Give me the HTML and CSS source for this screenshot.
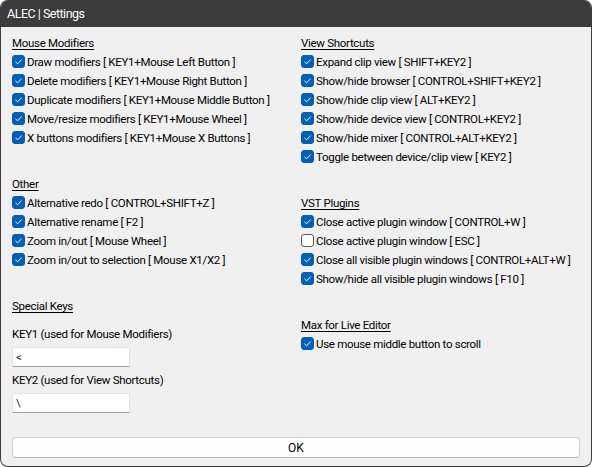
FILE: index.html
```html
<!DOCTYPE html>
<html lang="en">
<head>
    <meta charset="UTF-8">
    <title>ALEC | Settings</title>
    <link rel="stylesheet" href="styles.css">
</head>
<body>

<div class="window">
    <div class="titlebar">ALEC | Settings</div>

    <div class="content">
        <div class="columns">
            <!-- Left column -->
            <div class="column">
                <div class="group">
                    <div class="group-title">Mouse Modifiers</div>
                    <label class="option"><span class="box checked"></span>Draw modifiers [ KEY1+Mouse Left Button ]</label>
                    <label class="option"><span class="box checked"></span>Delete modifiers [ KEY1+Mouse Right Button ]</label>
                    <label class="option"><span class="box checked"></span>Duplicate modifiers [ KEY1+Mouse Middle Button ]</label>
                    <label class="option"><span class="box checked"></span>Move/resize modifiers [ KEY1+Mouse Wheel ]</label>
                    <label class="option"><span class="box checked"></span>X buttons modifiers [ KEY1+Mouse X Buttons ]</label>
                </div>

                <div class="group">
                    <div class="group-title">Other</div>
                    <label class="option"><span class="box checked"></span>Alternative redo [ CONTROL+SHIFT+Z ]</label>
                    <label class="option"><span class="box checked"></span>Alternative rename [ F2 ]</label>
                    <label class="option"><span class="box checked"></span>Zoom in/out [ Mouse Wheel ]</label>
                    <label class="option"><span class="box checked"></span>Zoom in/out to selection [ Mouse X1/X2 ]</label>
                </div>

                <div class="group">
                    <div class="group-title">Special Keys</div>
                    <div class="field-label first">KEY1 (used for Mouse Modifiers)</div>
                    <div class="textbox">&lt;</div>
                    <div class="field-label">KEY2 (used for View Shortcuts)</div>
                    <div class="textbox">\</div>
                </div>
            </div>

            <!-- Right column -->
            <div class="column">
                <div class="group">
                    <div class="group-title">View Shortcuts</div>
                    <label class="option"><span class="box checked"></span>Expand clip view [ SHIFT+KEY2 ]</label>
                    <label class="option"><span class="box checked"></span>Show/hide browser [ CONTROL+SHIFT+KEY2 ]</label>
                    <label class="option"><span class="box checked"></span>Show/hide clip view [ ALT+KEY2 ]</label>
                    <label class="option"><span class="box checked"></span>Show/hide device view [ CONTROL+KEY2 ]</label>
                    <label class="option"><span class="box checked"></span>Show/hide mixer [ CONTROL+ALT+KEY2 ]</label>
                    <label class="option"><span class="box checked"></span>Toggle between device/clip view [ KEY2 ]</label>
                </div>

                <div class="group">
                    <div class="group-title">VST Plugins</div>
                    <label class="option"><span class="box checked"></span>Close active plugin window [ CONTROL+W ]</label>
                    <label class="option"><span class="box"></span>Close active plugin window [ ESC ]</label>
                    <label class="option"><span class="box checked"></span>Close all visible plugin windows [ CONTROL+ALT+W ]</label>
                    <label class="option"><span class="box checked"></span>Show/hide all visible plugin windows [ F10 ]</label>
                </div>

                <div class="group">
                    <div class="group-title">Max for Live Editor</div>
                    <label class="option"><span class="box checked"></span>Use mouse middle button to scroll</label>
                </div>
            </div>
        </div>

        <div class="button-row">
            <button class="ok-button">OK</button>
        </div>
    </div>
</div>

</body>
</html>
```

FILE: styles.css
```css
/* Window frame */
html, body {
    margin: 0;
    padding: 0;
    background: #ffffff;
}

body {
    font-family: Roboto, "Noto Sans", sans-serif;
    font-size: 11.5px;
    letter-spacing: -0.3px;
    color: #000;
}

.window {
    width: 592px;
    height: 467px;
    box-sizing: border-box;
    background-color: #f0f0f0;
    border: 1px solid #3c3c3c;
    border-top: none;
    border-radius: 8px;
    overflow: hidden;
    display: flex;
    flex-direction: column;
}

.titlebar {
    height: 27px;
    flex: none;
    background-color: #3c3c3c;
    color: #fff;
    font-size: 12.5px;
    letter-spacing: -0.5px;
    line-height: 28px;
    padding-left: 6px;
}

.content {
    flex: 1;
    display: flex;
    flex-direction: column;
    padding: 7px 11px 8px 11px;
}

.columns {
    flex: 1;
    display: grid;
    grid-template-columns: 289px 1fr;
}

/* Option groups */
.group + .group {
    margin-top: 28px;
}

.group-title {
    height: 18px;
    line-height: 18px;
    text-decoration: underline;
    text-underline-offset: 2px;
}

.option {
    display: flex;
    align-items: center;
    height: 19px;
    white-space: nowrap;
}

/* Checkboxes */
.box {
    width: 13px;
    height: 13px;
    box-sizing: border-box;
    border: 1px solid #5a5a5a;
    border-radius: 3px;
    background: #fff;
    margin-right: 2px;
    flex: none;
}

.box.checked {
    border-color: #005fb8;
    background: #005fb8 url("data:image/svg+xml;utf8,<svg xmlns='http://www.w3.org/2000/svg' width='13' height='13'><path d='M3.5 6.8 L5.6 8.8 L9.6 4.6' fill='none' stroke='white' stroke-width='1'/></svg>") center / 13px 13px no-repeat;
}

/* Text boxes */
.field-label {
    height: 18px;
    line-height: 18px;
    margin-top: 5px;
}

.field-label.first {
    margin-top: 10px;
}

.textbox {
    width: 118px;
    height: 20px;
    box-sizing: border-box;
    margin-top: 4px;
    background: #fff;
    border: 1px solid #e3e3e3;
    border-bottom-color: #a0a0a0;
    padding-left: 3px;
    line-height: 18px;
    color: #333;
}

.textbox + .field-label {
    margin-top: 4px;
}

/* Bottom button */
.button-row {
    flex: none;
}

.ok-button {
    width: 100%;
    height: 21px;
    background: #fdfdfd;
    border: 1px solid #d0d0d0;
    border-bottom-color: #b8b8b8;
    border-radius: 4px;
    font-family: inherit;
    font-size: 12px;
    color: #000;
    padding: 0;
}
```
